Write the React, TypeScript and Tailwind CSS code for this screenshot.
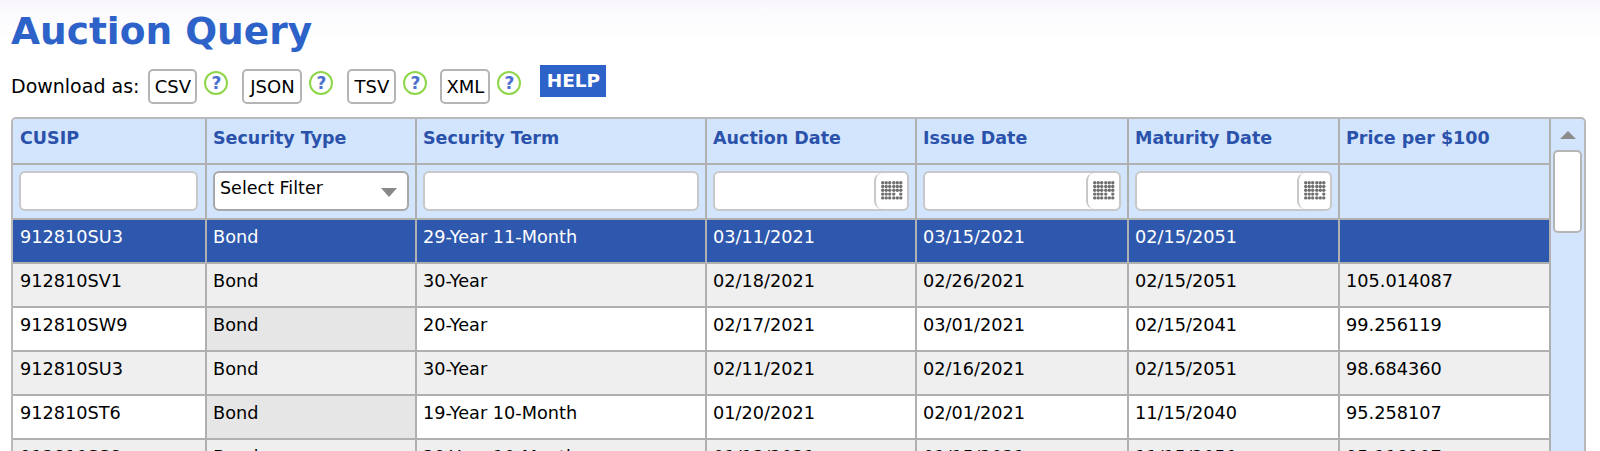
const font = "font-['DejaVu_Sans',Verdana,sans-serif]";

const rows = [
  { cusip: "912810SU3", term: "29-Year 11-Month", auction: "03/11/2021", issue: "03/15/2021", maturity: "02/15/2051", price: "" },
  { cusip: "912810SV1", term: "30-Year", auction: "02/18/2021", issue: "02/26/2021", maturity: "02/15/2051", price: "105.014087" },
  { cusip: "912810SW9", term: "20-Year", auction: "02/17/2021", issue: "03/01/2021", maturity: "02/15/2041", price: "99.256119" },
  { cusip: "912810SU3", term: "30-Year", auction: "02/11/2021", issue: "02/16/2021", maturity: "02/15/2051", price: "98.684360" },
  { cusip: "912810ST6", term: "19-Year 10-Month", auction: "01/20/2021", issue: "02/01/2021", maturity: "11/15/2040", price: "95.258107" },
  { cusip: "912810SS8", term: "29-Year 10-Month", auction: "01/13/2021", issue: "01/15/2021", maturity: "11/15/2050", price: "95.118107" },
];

const headers = ["CUSIP", "Security Type", "Security Term", "Auction Date", "Issue Date", "Maturity Date", "Price per $100"];

function HelpIcon() {
  return (
    <span className="mt-[6px] ml-[7px] flex h-[24px] w-[24px] items-center justify-center rounded-full border-[2px] border-[#8fd64a] bg-white text-[17px] leading-none font-bold text-[#4a6fd0]">
      ?
    </span>
  );
}

function DownloadButton({ label, width }: { label: string; width: string }) {
  return (
    <span className={`mt-[4px] flex h-[35px] items-center justify-center rounded-[5px] border-2 border-[#b5b5b5] bg-white text-[18px] text-black ${width}`}>
      {label}
    </span>
  );
}

function CalendarIcon() {
  const dots = [];
  for (let y = 0; y < 5; y++) {
    for (let x = 0; x < 6; x++) {
      if (x === 4 && y === 3) continue;
      dots.push(<circle key={`${x}-${y}`} cx={1.7 + x * 3.5 + (x > 2 ? 0.6 : 0)} cy={1.7 + y * 3.8} r="1.7" fill="#707070" />);
    }
  }
  return (
    <svg width="22" height="19" viewBox="0 0 22 19">
      {dots}
    </svg>
  );
}

function DateFilter() {
  return (
    <div className="flex h-[40px] overflow-hidden rounded-[6px] border-2 border-[#c8c8c8] bg-white">
      <div className="flex-1" />
      <div className="flex w-[33px] items-center justify-center rounded-l-[8px] border-l-2 border-[#c8c8c8]">
        <CalendarIcon />
      </div>
    </div>
  );
}

function TextFilter() {
  return <div className="h-[40px] rounded-[6px] border-2 border-[#c8c8c8] bg-white" />;
}

export default function App() {
  return (
    <div className={`${font} h-[451px] overflow-hidden bg-white`}>
      <div className="bg-gradient-to-b from-[#f9f7fc] to-white to-[40px] px-[11px] pt-[6px]">
        <h1 className="text-[37.5px] leading-[50px] font-bold text-[#2d62c9]">Auction Query</h1>
        <div className="mt-[9px] flex h-[39px] items-start text-black">
          <span className="mt-[4px] mr-[9px] flex h-[35px] items-center text-[19px]">Download as:</span>
          <DownloadButton label="CSV" width="w-[49px]" />
          <HelpIcon />
          <span className="w-[14px]" />
          <DownloadButton label="JSON" width="w-[60px]" />
          <HelpIcon />
          <span className="w-[14px]" />
          <DownloadButton label="TSV" width="w-[49px]" />
          <HelpIcon />
          <span className="w-[13px]" />
          <DownloadButton label="XML" width="w-[50px]" />
          <HelpIcon />
          <span className="ml-[19px] flex h-[32px] w-[66px] items-center justify-center bg-[#2d62c9] text-[18.5px] font-bold text-white">
            HELP
          </span>
        </div>
      </div>
      <div className="mx-[11px] mt-[13px] flex w-[1575px] overflow-hidden rounded-t-[5px] border-2 border-[#b9b9b9] bg-[#d3e5fd]">
        <table className="w-[1537px] table-fixed border-collapse text-[17.7px]">
          <colgroup>
            <col className="w-[193px]" />
            <col className="w-[210px]" />
            <col className="w-[290px]" />
            <col className="w-[210px]" />
            <col className="w-[212px]" />
            <col className="w-[211px]" />
            <col className="w-[211px]" />
          </colgroup>
          <thead>
            <tr className="h-[45px] bg-[#d3e5fd]">
              {headers.map((h) => (
                <th key={h} className="border-2 border-t-0 border-l-0 border-[#b0b0b0] pb-[5px] pl-[6px] text-left align-middle text-[17.5px] font-bold text-[#2a52ab] first:pl-[7px]">
                  {h}
                </th>
              ))}
            </tr>
            <tr className="h-[55px] bg-[#d3e5fd]">
              <th className="border-2 border-l-0 border-[#b0b0b0] pr-[7px] pb-[2px] pl-[6px] font-normal"><TextFilter /></th>
              <th className="border-2 border-[#b0b0b0] px-[6px] pb-[2px] font-normal">
                <div className="relative flex h-[40px] items-center rounded-[6px] border-2 border-[#a8a8a8] bg-white pb-[4px] pl-[5px] text-left text-[17.5px] text-black">
                  Select Filter
                  <span className="absolute right-[10px] top-[15px] h-0 w-0 border-x-[8px] border-t-[9px] border-x-transparent border-t-[#888]" />
                </div>
              </th>
              <th className="border-2 border-[#b0b0b0] px-[6px] pb-[2px] font-normal"><TextFilter /></th>
              <th className="border-2 border-[#b0b0b0] px-[6px] pb-[2px] font-normal"><DateFilter /></th>
              <th className="border-2 border-[#b0b0b0] px-[6px] pb-[2px] font-normal"><DateFilter /></th>
              <th className="border-2 border-[#b0b0b0] px-[6px] pb-[2px] font-normal"><DateFilter /></th>
              <th className="border-2 border-[#b0b0b0] px-[6px] font-normal" />
            </tr>
          </thead>
          <tbody>
            {rows.map((r, i) => {
              const selected = i === 0;
              const rowClass = selected ? "bg-[#2e58ae] text-white" : i % 2 === 1 ? "bg-[#efefef] text-black" : "bg-white text-black";
              const cell = "border-2 border-[#b0b0b0] pb-[7px] pl-[6px] align-middle whitespace-nowrap";
              return (
                <tr key={i} className={`h-[44px] ${rowClass}`}>
                  <td className={`${cell} border-l-0 pl-[7px]`}>{r.cusip}</td>
                  <td className={`${cell} ${!selected && i % 2 === 0 ? "bg-[#e6e6e6]" : ""}`}>Bond</td>
                  <td className={cell}>{r.term}</td>
                  <td className={cell}>{r.auction}</td>
                  <td className={cell}>{r.issue}</td>
                  <td className={cell}>{r.maturity}</td>
                  <td className={cell}>{r.price}</td>
                </tr>
              );
            })}
          </tbody>
        </table>
        <div className="flex flex-1 flex-col items-center pt-[12px]">
          <span className="h-0 w-0 border-x-[8px] border-b-[8px] border-x-transparent border-b-[#8c8c8c]" />
          <div className="mt-[11px] h-[83px] w-[29px] rounded-[5px] border-2 border-[#b5b5b5] bg-white" />
        </div>
      </div>
    </div>
  );
}
